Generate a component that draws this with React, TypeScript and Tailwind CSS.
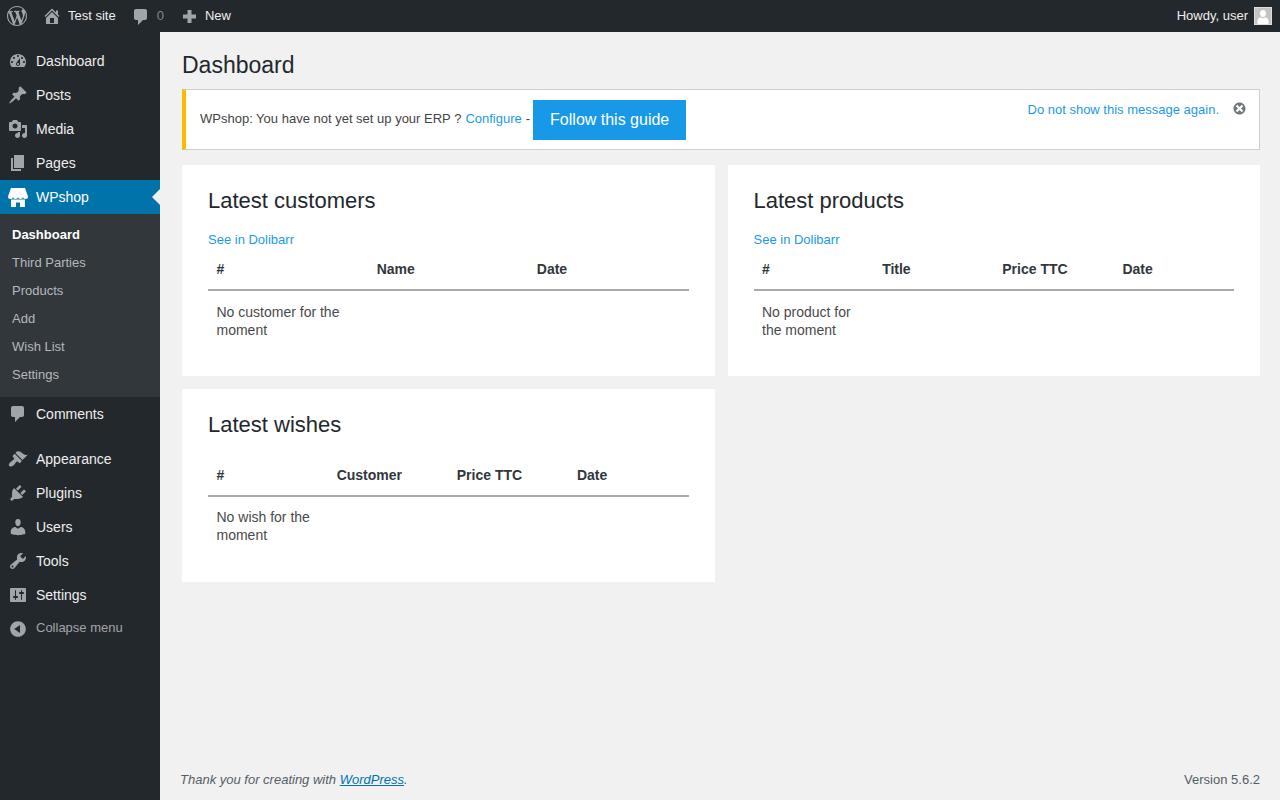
type IconProps = {
  d: string;
  className?: string;
};

const Dash = ({ d, className = 'w-5 h-5' }: IconProps) => (
  <svg viewBox="0 0 20 20" fill="currentColor" className={className}>
    <path d={d} />
  </svg>
);

const icons = {
  wp: 'M20 10c0-5.51-4.49-10-10-10C4.48 0 0 4.49 0 10c0 5.52 4.48 10 10 10 5.51 0 10-4.48 10-10zM7.78 15.37L4.37 6.22c.55-.02 1.17-.08 1.17-.08.5-.06.44-1.13-.06-1.11 0 0-1.45.11-2.37.11-.18 0-.37 0-.58-.01C4.12 2.69 6.87 1.11 10 1.11c2.33 0 4.45.87 6.05 2.34-.68-.11-1.65.39-1.65 1.58 0 .74.45 1.36.9 2.1.35.61.55 1.36.55 2.46 0 1.49-1.4 5-1.4 5l-3.03-8.37c.54-.02.82-.17.82-.17.5-.05.44-1.25-.06-1.22 0 0-1.44.12-2.38.12-.87 0-2.33-.12-2.33-.12-.5-.03-.56 1.2-.06 1.22l.92.08 1.26 3.41zM17.41 10c.24-.64.74-1.87.43-4.25.7 1.29 1.05 2.71 1.05 4.25 0 3.29-1.73 6.24-4.4 7.78.97-2.59 1.94-5.2 2.92-7.78zM6.1 18.09C3.12 16.65 1.11 13.53 1.11 10c0-1.3.23-2.48.72-3.59C3.25 10.3 4.67 14.2 6.1 18.09zm4.03-6.63l2.58 6.98c-.86.29-1.76.45-2.71.45-.79 0-1.57-.11-2.29-.33.81-2.38 1.62-4.74 2.42-7.1z',
  home: 'M16 8.5l1.53 1.53-1.06 1.06L10 4.62l-6.47 6.47-1.06-1.06L10 2.5l4 4v-2h2v4zm-6-2.46l6 5.99V18H4v-5.97zM12 17v-5H8v5h4z',
  comment: 'M5 2h9c1.1 0 2 .9 2 2v7c0 1.1-.9 2-2 2h-2l-5 5v-5H5c-1.1 0-2-.9-2-2V4c0-1.1.9-2 2-2z',
  plus: 'M17 8.500v4h-4.500V17h-4v-4.500H4v-4h4.500V4h4v4.500z',
  dashboard: 'M3.76 16h12.48c1.1-1.37 1.76-3.11 1.76-5 0-4.42-3.58-8-8-8s-8 3.58-8 8c0 1.89.66 3.63 1.76 5zM10 4c.55 0 1 .45 1 1s-.45 1-1 1-1-.45-1-1 .45-1 1-1zM6 6c.55 0 1 .45 1 1s-.45 1-1 1-1-.45-1-1 .45-1 1-1zm8 0c.55 0 1 .45 1 1s-.45 1-1 1-1-.45-1-1 .45-1 1-1zm-5.37 5.55L12 7v6c0 1.1-.9 2-2 2s-2-.9-2-2c0-.57.24-1.08.63-1.45zM4 10c.55 0 1 .45 1 1s-.45 1-1 1-1-.45-1-1 .45-1 1-1zm12 0c.55 0 1 .45 1 1s-.45 1-1 1-1-.45-1-1 .45-1 1-1zm-5 3c0-.55-.45-1-1-1s-1 .45-1 1 .45 1 1 1 1-.45 1-1z',
  post: 'M10.44 3.02l1.82-1.82 6.36 6.35-1.83 1.82c-1.05-.68-2.48-.57-3.41.36l-.75.75c-.92.93-1.04 2.35-.35 3.41l-1.83 1.82-2.41-2.41-2.8 2.79c-.42.42-3.38 2.71-3.8 2.29s1.86-3.39 2.28-3.81l2.79-2.79L4.1 9.36l1.83-1.82c1.05.69 2.48.57 3.4-.36l.75-.75c.93-.92 1.05-2.35.36-3.41z',
  media: 'M13 11V4c0-.55-.45-1-1-1h-1.67L9 1H5L3.67 3H2c-.55 0-1 .45-1 1v7c0 .55.45 1 1 1h10c.55 0 1-.45 1-1zM7 4.5c1.38 0 2.5 1.12 2.5 2.5S8.38 9.5 7 9.5 4.5 8.38 4.5 7 5.62 4.5 7 4.5zM14 6h5v10.5c0 1.38-1.12 2.5-2.5 2.5S14 17.88 14 16.5s1.12-2.5 2.5-2.5c.17 0 .34.02.5.05V9h-3V6zm-4 8.05V13h2v3.5c0 1.38-1.12 2.5-2.5 2.5S7 17.88 7 16.5 8.12 14 9.5 14c.17 0 .34.02.5.05z',
  page: 'M6 15V2h10v13H6zm-1 1h8v2H3V5h2v11z',
  appearance: 'M14.48 11.06L7.41 3.99l1.5-1.5c.5-.56 2.3-.47 3.51.32 1.21.8 1.43 1.28 2.91 2.1 1.18.64 2.45 1.26 4.45.85zm-.71.71L6.7 4.7 4.93 6.47c-.39.39-.39 1.02 0 1.41l1.06 1.06c.39.39.39 1.03 0 1.42-.6.6-1.43 1.11-2.21 1.69-.35.26-.7.53-1.01.84C1.43 13.23.28 16.08 1.3 17.1c1.02 1.02 3.7-.25 4.67-1.21.31-.31.58-.66.84-1.01.58-.78 1.09-1.61 1.69-2.21.39-.39 1.02-.39 1.41 0l1.06 1.06c.39.39 1.02.39 1.41 0z',
  plugins: 'M13.11 4.36L9.87 7.6 8 5.73l3.24-3.24c.35-.34 1.05-.2 1.56.32.52.51.66 1.21.31 1.55zm-8 1.77l.91-1.12 9.01 9.01-1.19.84c-.71.71-2.63 1.16-3.82 1.16H6.14L4.9 17.26c-.59.59-1.54.59-2.12 0-.59-.58-.59-1.53 0-2.12l1.24-1.24v-3.88c0-1.13.4-3.19 1.09-3.89zm7.26 3.97l3.24-3.24c.34-.35 1.04-.21 1.55.31.52.51.66 1.21.31 1.55l-3.24 3.25z',
  users: 'M10 9.25c-2.27 0-2.73-3.44-2.73-3.44C7 4.02 7.82 2 9.97 2c2.16 0 2.98 2.02 2.71 3.81 0 0-.41 3.44-2.68 3.44zm0 2.57L12.72 10c2.39 0 4.52 2.33 4.52 4.53v2.49s-3.65 1.13-7.24 1.13c-3.65 0-7.24-1.13-7.24-1.13v-2.49c0-2.25 1.94-4.48 4.47-4.48z',
  tools: 'M16.68 9.77c-1.34 1.34-3.3 1.67-4.95.99l-5.41 6.52c-.99.99-2.59.99-3.58 0s-.99-2.59 0-3.57l6.52-5.42c-.68-1.65-.35-3.61.99-4.95 1.28-1.28 3.12-1.62 4.72-1.06l-2.89 2.89 2.82 2.82 2.86-2.87c.53 1.58.18 3.39-1.08 4.65zM3.81 16.21c.4.39 1.04.39 1.43 0 .4-.4.4-1.04 0-1.43-.39-.4-1.03-.4-1.43 0-.39.39-.39 1.03 0 1.43z',
  settings: 'M18 16V4c0-.55-.45-1-1-1H3c-.55 0-1 .45-1 1v12c0 .55.45 1 1 1h14c.55 0 1-.45 1-1zM8 11h1c.55 0 1 .45 1 1s-.45 1-1 1H8v1.5c0 .28-.22.5-.5.5s-.5-.22-.5-.5V13H6c-.55 0-1-.45-1-1s.45-1 1-1h1V5.5c0-.28.22-.5.5-.5s.5.22.5.5V11zm5-2h-1c-.55 0-1-.45-1-1s.45-1 1-1h1V5.5c0-.28.22-.5.5-.5s.5.22.5.5V7h1c.55 0 1 .45 1 1s-.45 1-1 1h-1v5.5c0 .28-.22.5-.5.5s-.5-.22-.5-.5V9z',
  collapse: 'M10 2.16c4.33 0 7.84 3.51 7.84 7.84s-3.51 7.84-7.84 7.84S2.16 14.33 2.16 10 5.71 2.16 10 2.16zm2 11.72V6.12L6.18 9.97z',
  dismiss: 'M10 2c4.42 0 8 3.58 8 8s-3.58 8-8 8-8-3.58-8-8 3.58-8 8-8zm5 11l-3-3 3-3-2-2-3 3-3-3-2 2 3 3-3 3 2 2 3-3 3 3z',
};

const StoreIcon = () => (
  <svg viewBox="0 0 20 19" fill="currentColor" className="w-5 h-[19px]">
    <path d="M3 0h14l3 8.500a2.500 2.500 0 0 1-5 0 2.500 2.500 0 0 1-5 0 2.500 2.500 0 0 1-5 0 2.500 2.500 0 0 1-5 0z" />
    <path d="M3 11.500h14V19h-5v-4.500H8V19H3z" />
  </svg>
);

const MenuItem = ({ icon, label }: { icon: string; label: string }) => (
  <div className="flex items-center h-[34px] pl-2 text-[14px] text-[#eeeeee]">
    <span className="text-[#a0a5aa]">
      <Dash d={icon} />
    </span>
    <span className="ml-2">{label}</span>
  </div>
);

const submenu = ['Third Parties', 'Products', 'Add', 'Wish List', 'Settings'];

const Sidebar = () => (
  <aside className="w-40 shrink-0 bg-[#23282d] pt-3">
    <MenuItem icon={icons.dashboard} label="Dashboard" />
    <MenuItem icon={icons.post} label="Posts" />
    <MenuItem icon={icons.media} label="Media" />
    <MenuItem icon={icons.page} label="Pages" />
    <div className="relative flex items-center h-[34px] pl-2 bg-[#0073aa] text-[14px] text-white">
      <StoreIcon />
      <span className="ml-2">WPshop</span>
      <span className="absolute right-0 top-[9px] border-y-8 border-r-8 border-y-transparent border-r-[#f1f1f1]" />
    </div>
    <div className="bg-[#32373c] pt-[7px] pb-[8px] text-[13px] text-[#b4b9be]">
      <div className="h-7 px-3 leading-7 font-bold text-white">Dashboard</div>
      {submenu.map((item) => (
        <div key={item} className="h-7 px-3 leading-7">
          {item}
        </div>
      ))}
    </div>
    <MenuItem icon={icons.comment} label="Comments" />
    <div className="h-[11px]" />
    <MenuItem icon={icons.appearance} label="Appearance" />
    <MenuItem icon={icons.plugins} label="Plugins" />
    <MenuItem icon={icons.users} label="Users" />
    <MenuItem icon={icons.tools} label="Tools" />
    <MenuItem icon={icons.settings} label="Settings" />
    <div className="flex items-center h-8 pl-2 text-[13px] text-[#a0a5aa]">
      <span className="mt-[2px]">
        <Dash d={icons.collapse} />
      </span>
      <span className="ml-2">Collapse menu</span>
    </div>
  </aside>
);

const TopBar = () => (
  <header className="flex items-center justify-between h-8 shrink-0 bg-[#23282d] text-[13px] text-[#eeeeee]">
    <div className="flex items-center">
      <span className="ml-[7px] text-[#a0a5aa]">
        <Dash d={icons.wp} />
      </span>
      <span className="ml-[15px] text-[#a0a5aa]">
        <Dash d={icons.home} />
      </span>
      <span className="ml-[6px]">Test site</span>
      <span className="ml-[15px] mt-[1px] text-[#a0a5aa]">
        <Dash d={icons.comment} />
      </span>
      <span className="ml-[6px] text-[#82878c]">0</span>
      <span className="ml-[15px] text-[#a0a5aa]">
        <Dash d={icons.plus} />
      </span>
      <span className="ml-[6px]">New</span>
    </div>
    <div className="flex items-center pr-2">
      <span>Howdy, user</span>
      <span className="ml-[6px] flex items-end justify-center w-[18px] h-[18px] overflow-hidden bg-[#c4c4c4] border border-[#dddddd]">
        <svg viewBox="0 0 16 16" fill="#ffffff" className="w-4 h-4">
          <path d="M8 2c1.9 0 3 1.5 3 3.3C11 7.2 9.800 9 8 9S5 7.200 5 5.300C5 3.500 6.100 2 8 2zM5.800 9.200 8 10.500l2.200-1.300c1.900.4 3.300 1.700 3.300 3.500V16h-11v-3.300c0-1.800 1.400-3.100 3.300-3.500z" />
        </svg>
      </span>
    </div>
  </header>
);

type PanelProps = {
  title: string;
  link?: boolean;
  columns: string[];
  empty: string;
};

const Panel = ({ title, link, columns, empty }: PanelProps) => (
  <section className="group bg-white px-[26px] pt-[23px] pb-[37px] last:pb-[38px]">
    <h2 className="text-[22px] leading-[26px] text-[#23282d] mb-[17px]">{title}</h2>
    {link && <a className="block text-[13px] leading-[18px] text-[#1a9ae8]">See in Dolibarr</a>}
    <table className="w-full table-fixed text-[14px] leading-[18px] text-[#4a4a4a]">
      <thead>
        <tr className="border-b-2 border-[#aaaaaa]">
          {columns.map((col) => (
            <th key={col} className="h-[41px] px-[8.5px] text-left font-bold text-[#32373c]">
              {col}
            </th>
          ))}
        </tr>
      </thead>
      <tbody>
        <tr>
          <td className="px-[8.5px] pt-3 group-last:pt-[11px] align-top">{empty}</td>
          {columns.slice(1).map((col) => (
            <td key={col} />
          ))}
        </tr>
      </tbody>
    </table>
  </section>
);

export default function App() {
  return (
    <div className="flex flex-col h-screen overflow-hidden bg-[#f1f1f1] font-['Liberation_Sans',Arial,sans-serif]">
      <TopBar />
      <div className="flex flex-1 min-h-0">
        <Sidebar />
        <main className="flex flex-col flex-1 min-w-0 pr-5">
          <div className="pl-[22px]">
            <h1 className="pt-[18px] mb-[9px] text-[23px] leading-[30px] text-[#23282d]">Dashboard</h1>
            <div className="flex justify-between h-[61px] pl-[14px] pr-[12px] bg-white border border-[#ccd0d4] border-l-4 border-l-[#ffb900] text-[13px] text-[#444444]">
              <div className="flex items-center">
                <span className="-mt-[2px]">WPshop: You have not yet set up your ERP ?</span>
                <a className="ml-1 -mt-[2px] text-[#1a9ae8]">Configure</a>
                <span className="ml-1 -mt-[2px]">-</span>
                <a className="ml-[3px] flex items-center h-10 px-[17px] bg-[#1899e8] text-[16px] text-white">
                  Follow this guide
                </a>
              </div>
              <div className="flex items-start pt-[11px]">
                <a className="text-[#1a9ae8] leading-[18px]">Do not show this message again.</a>
                <span className="ml-[13px] text-[#72777c]">
                  <Dash d={icons.dismiss} className="w-[15px] h-[15px]" />
                </span>
              </div>
            </div>
            <div className="grid grid-cols-2 gap-[13px] mt-[15px]">
              <Panel title="Latest customers" link columns={['#', 'Name', 'Date']} empty="No customer for the moment" />
              <Panel
                title="Latest products"
                link
                columns={['#', 'Title', 'Price TTC', 'Date']}
                empty="No product for the moment"
              />
              <Panel
                title="Latest wishes"
                columns={['#', 'Customer', 'Price TTC', 'Date']}
                empty="No wish for the moment"
              />
            </div>
          </div>
          <footer className="flex justify-between mt-auto pl-5 pb-[11px] text-[13px] leading-[18px] text-[#555d66]">
            <span className="italic">
              Thank you for creating with <a className="text-[#0073aa] underline">WordPress</a>.
            </span>
            <span>Version 5.6.2</span>
          </footer>
        </main>
      </div>
    </div>
  );
}
